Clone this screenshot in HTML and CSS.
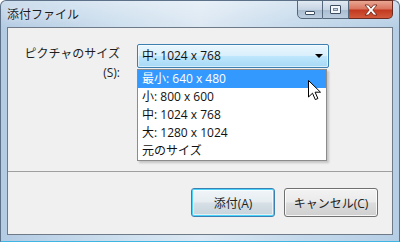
FILE: index.html
```html
<!DOCTYPE html>
<html lang="ja">
<head>
<meta charset="utf-8">
<link rel="stylesheet" href="styles.css">
</head>
<body>
<div class="window">
  <div class="titlebar">
    <div class="title">添付ファイル</div>
    <div class="controls">
      <div class="cbtn min"><span class="min-icon"></span></div>
      <div class="cbtn max"><span class="max-icon"></span></div>
      <div class="cbtn close">
        <svg width="16" height="12" viewBox="0 0 16 12"><path d="M2 1h3.5L8 4.2 10.5 1H14L9.8 6 14 11h-3.5L8 7.8 5.5 11H2l4.2-5z" fill="#fff" stroke="#6b1d10" stroke-width="0.8"/></svg>
      </div>
    </div>
  </div>
  <div class="client">
    <div class="content">
      <div class="label">ピクチャのサイズ<br>(S):</div>
      <div class="combo">
        <div class="combo-box">
          <span class="combo-text">中: 1024 x 768</span>
          <span class="arrow"></span>
        </div>
        <ul class="list">
          <li class="sel">最小: 640 x 480</li>
          <li>小: 800 x 600</li>
          <li>中: 1024 x 768</li>
          <li>大: 1280 x 1024</li>
          <li>元のサイズ</li>
        </ul>
        <svg class="cursor" width="13" height="21" viewBox="0 0 13 21"><path d="M0.5 0.5V17l4-3.8 2.8 6.4 2.6-1.1-2.8-6.3h5.4z" fill="#fff" stroke="#000" stroke-width="1"/></svg>
      </div>
    </div>
    <div class="footer">
      <div class="btn default">添付(A)</div>
      <div class="btn cancel">キャンセル(C)</div>
    </div>
  </div>
</div>
</body>
</html>
```
FILE: styles.css
```css
* { box-sizing: border-box; }
html, body { margin: 0; padding: 0; }
body {
  width: 400px; height: 242px; overflow: hidden;
  font-family: "Open Sans", "Noto Sans CJK JP", sans-serif;
  font-size: 12px; color: #000; background: #fff;
}
.window {
  width: 400px; height: 242px;
  border: 1px solid #5d7188;
  border-bottom-color: #3fb5e3;
  border-radius: 6px 6px 0 0;
  background:
    linear-gradient(180deg, rgba(255,255,255,0.35) 0, rgba(255,255,255,0) 27px),
    linear-gradient(90deg, #b3cbe3 0%, #cddfee 30%, #dce8f3 50%, #c4d9eb 75%, #b6cee5 100%);
  display: flex; flex-direction: column;
  padding: 0 6px 6px 6px;
}
.titlebar {
  height: 26px; display: flex; justify-content: space-between; align-items: flex-start;
}
.title {
  padding: 5px 0 0 0; line-height: 17px; font-size: 12px; color: #1b1b1b;
  text-shadow: 0 0 6px rgba(255,255,255,0.9);
}
.controls { display: flex; margin-top: -1px; }
.cbtn {
  height: 19px; border: 1px solid #56687c; border-left: none;
  display: flex; align-items: center; justify-content: center;
}
.cbtn.min {
  width: 26px; border-left: 1px solid #56687c; border-radius: 0 0 0 5px;
  background: linear-gradient(180deg, #e1eaf3 0%, #c6d4e3 50%, #a9bcd0 51%, #bccddf 100%);
}
.cbtn.max {
  width: 26px;
  background: linear-gradient(180deg, #e1eaf3 0%, #c6d4e3 50%, #a9bcd0 51%, #bccddf 100%);
}
.cbtn.close {
  width: 44px; border-radius: 0 0 5px 0; border-color: #6b2b20;
  background: linear-gradient(180deg, #e9a792 0%, #d9735d 48%, #c2381f 52%, #d25a3c 100%);
}
.min-icon {
  width: 10px; height: 4px; margin-top: 6px; background: #fff;
  border: 1px solid #3d4e62; border-radius: 1px;
}
.max-icon {
  width: 11px; height: 9px; border: 1px solid #3d4e62;
  box-shadow: inset 0 0 0 2px #f4f8fb, inset 0 0 0 3px #7a8a9c;
  border-radius: 1px;
}
.client {
  flex: 1; border: 1px solid #6e7a87; background: #f0f0f0;
  display: flex; flex-direction: column;
}
.content {
  height: 144px; display: flex; align-items: flex-start;
  padding-top: 16px; gap: 17px;
  border-bottom: 1px solid #a0a0a0;
}
.label {
  width: 112px; text-align: right; line-height: 19px; font-size: 12px; color: #1e1e1e;
}
.combo { position: relative; width: 192px; }
.combo-box {
  height: 24px; border: 1px solid #3c7fb1; border-radius: 2px;
  background: linear-gradient(180deg, #eaf6fd 0%, #d9f0fc 48%, #bee6fd 52%, #a7d9f5 100%);
  display: flex; align-items: center; justify-content: space-between;
  padding: 0 3px 0 4px;
  box-shadow: inset 0 0 0 1px rgba(255,255,255,0.55);
}
.combo-text { line-height: 18px; color: #111; }
.arrow {
  width: 0; height: 0; margin-right: 2px;
  border-left: 4px solid transparent; border-right: 4px solid transparent;
  border-top: 4px solid #000;
}
.list {
  position: absolute; top: 25px; left: 0; width: 190px;
  margin: 0; padding: 0; list-style: none;
  background: #fff; border: 1px solid #8c8c8c;
  box-shadow: 2px 2px 2px rgba(0,0,0,0.18);
}
.list li { height: 18px; line-height: 18px; padding-left: 4px; color: #111; }
.list li.sel { background: #3399ff; color: #fff; }
.cursor { position: absolute; left: 171px; top: 36px; }
.footer {
  flex: 1; display: flex; justify-content: flex-end; align-items: flex-start;
  padding: 16px 14px 0 0; gap: 9px;
}
.btn {
  height: 29px; border: 1px solid #707070; border-radius: 3px;
  display: flex; align-items: center; justify-content: center;
  background: linear-gradient(180deg, #f2f2f2 0%, #ebebeb 48%, #dddddd 52%, #cfcfcf 100%);
  box-shadow: inset 0 0 0 1px rgba(255,255,255,0.8);
  color: #222; font-size: 12px;
}
.btn.default {
  width: 84px; border-color: #3c7fb1;
  box-shadow: inset 0 0 0 1px #48d4fb, inset 0 0 0 2px rgba(255,255,255,0.6);
  background: linear-gradient(180deg, #f0f5f8 0%, #e6edf1 48%, #d6e0e6 52%, #c6d3da 100%);
}
.btn.cancel { width: 94px; }
```
